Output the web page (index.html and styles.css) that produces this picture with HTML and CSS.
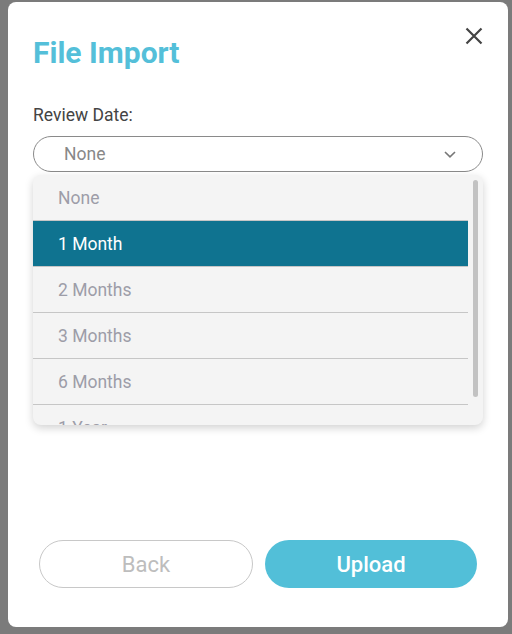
FILE: index.html
```html
<!DOCTYPE html>
<html>
<head>
<meta charset="utf-8">
<link rel="stylesheet" href="styles.css">
</head>
<body>
<div class="modal">
  <button class="close" aria-label="Close">
    <svg width="18" height="18" viewBox="0 0 18 18"><path d="M1.5 1.5 L16.5 16.5 M16.5 1.5 L1.5 16.5" stroke="#444" stroke-width="2.2" fill="none"/></svg>
  </button>
  <h1 class="title">File Import</h1>
  <div class="label">Review Date:</div>
  <div class="field">
    <div class="select">
      <span class="select-value">None</span>
      <svg class="chevron" width="12" height="7" viewBox="0 0 12 7"><path d="M1 1 L6 5.8 L11 1" stroke="#777" stroke-width="1.6" fill="none"/></svg>
    </div>
    <div class="dropdown">
      <ul class="options">
        <li class="option">None</li>
        <li class="option selected">1 Month</li>
        <li class="option">2 Months</li>
        <li class="option">3 Months</li>
        <li class="option">6 Months</li>
        <li class="option">1 Year</li>
      </ul>
      <div class="track"><div class="thumb"></div></div>
    </div>
  </div>
  <div class="actions">
    <button class="btn back">Back</button>
    <button class="btn upload">Upload</button>
  </div>
</div>
</body>
</html>
```
FILE: styles.css
```css
html, body {
  margin: 0;
  padding: 0;
}
body {
  background: #7b7b7b;
  font-family: Roboto, "Liberation Sans", sans-serif;
  width: 512px;
  height: 634px;
  overflow: hidden;
}
.modal {
  position: relative;
  margin: 2px 0 0 8px;
  width: 500px;
  height: 625px;
  box-sizing: border-box;
  background: #fff;
  border-radius: 8px;
  padding: 33px 25px 39px 25px;
  display: flex;
  flex-direction: column;
}
.close {
  position: absolute;
  top: 25px;
  right: 25px;
  border: 0;
  background: none;
  padding: 0;
  width: 18px;
  height: 18px;
  display: flex;
}
.title {
  margin: 0;
  font-size: 30px;
  line-height: 36px;
  font-weight: 700;
  color: #54bfd9;
}
.label {
  margin-top: 34px;
  font-size: 17.5px;
  line-height: 20px;
  color: #444;
}
.field {
  position: relative;
  margin-top: 11px;
}
.select {
  height: 36px;
  box-sizing: border-box;
  border: 1px solid #8a8a8a;
  border-radius: 18px;
  display: flex;
  align-items: center;
  justify-content: space-between;
  padding: 0 26px 0 30px;
}
.select-value {
  font-size: 17.5px;
  color: #888;
}
.dropdown {
  position: absolute;
  top: 39px;
  left: 0;
  right: 0;
  height: 250px;
  background: #f4f4f4;
  border-radius: 8px;
  box-shadow: 0 3px 8px rgba(0, 0, 0, 0.18);
  display: flex;
  overflow: hidden;
  z-index: 2;
}
.options {
  list-style: none;
  margin: 0;
  padding: 0;
  flex: 1;
}
.option {
  height: 45px;
  border-bottom: 1px solid #c6c6c6;
  display: flex;
  align-items: center;
  padding-left: 25px;
  font-size: 17.5px;
  color: #9d9da8;
}
.option.selected {
  background: #0f7390;
  color: #fff;
}
.track {
  width: 15px;
  padding-top: 5px;
  display: flex;
  justify-content: center;
}
.thumb {
  width: 5px;
  height: 217px;
  border-radius: 3px;
  background: #c2c2c2;
}
.actions {
  margin-top: auto;
  padding: 0 6px;
  display: flex;
  gap: 12px;
}
.btn {
  flex: 1;
  height: 48px;
  border-radius: 24px;
  font-family: Roboto, "Liberation Sans", sans-serif;
  font-size: 22px;
  padding: 0;
}
.back {
  background: #fff;
  border: 1px solid #c8c8c8;
  color: #bdbdbd;
}
.upload {
  background: #52bfd8;
  border: 0;
  color: #fff;
  font-weight: 500;
}
```
